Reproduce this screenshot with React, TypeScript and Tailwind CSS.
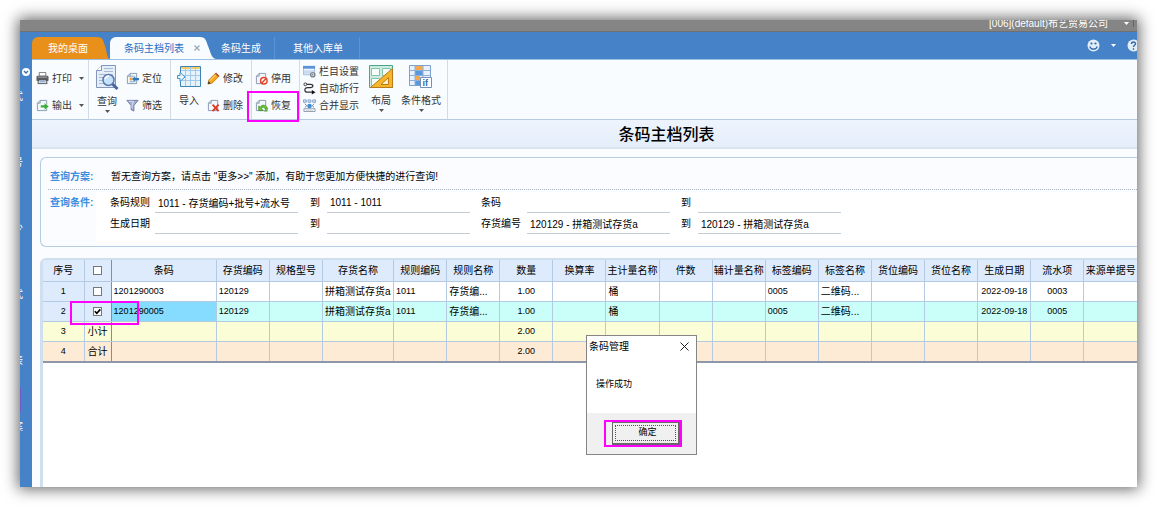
import React, { useState } from "react";
import { clsx } from "clsx";

const Caret: React.FC<{ className?: string }> = ({ className }) => (
  <svg width="5" height="3" viewBox="0 0 5 3" className={clsx("shrink-0", className)} aria-hidden="true">
    <path d="M0 0h5L2.5 3z" fill="currentColor" />
  </svg>
);

const Page = () => (
  <>
    <path d="M4.5 1.5h7v11h-10v-8z" fill="#f3f7fb" stroke="#8496ad" />
    <path d="M1.5 4.5h3v-3" fill="none" stroke="#8496ad" />
  </>
);

const SmallIcon: React.FC<{ children: React.ReactNode }> = ({ children }) => (
  <svg width="13" height="13" viewBox="0 0 14 14" className="shrink-0" aria-hidden="true">
    {children}
  </svg>
);

const PrintIcon = () => (
  <SmallIcon>
    <path d="M3.5.5h7v4h-7z" fill="#fff" stroke="#777" />
    <rect x=".5" y="4" width="13" height="6" rx="1.5" fill="#595d63" />
    <rect x="2" y="5" width="10" height="1" fill="#a9afb8" />
    <path d="M3 8.5h8l1 4H2z" fill="#dce8f7" stroke="#555" />
    <path d="M4 10.5h6" stroke="#6f9dd6" />
  </SmallIcon>
);

const ExportIcon = () => (
  <SmallIcon>
    <Page />
    <path d="M5 6.5h4V4l5 4-5 4V9.5H5z" fill="#35ad36" stroke="#fff" strokeWidth=".5" />
  </SmallIcon>
);

const LocateIcon = () => (
  <SmallIcon>
    <Page />
    <path d="M4 6h3v3H4z" fill="#f0a030" />
    <path d="M4 10.5h5M4 4.5h5" stroke="#7aa5d6" />
    <path d="M6.500 7.500l3.500-3v2h4v2.500h-4V11z" fill="#2e76bd" />
  </SmallIcon>
);

const FilterIcon = () => (
  <SmallIcon>
    <path d="M1 1.5h12L8.5 7v6l-3-1.5V7z" fill="#a3aed4" stroke="#6d7798" />
    <path d="M3 2.5h5L6.5 7v3" fill="none" stroke="#dfe6f8" />
  </SmallIcon>
);

const EditIcon = () => (
  <SmallIcon>
    <path d="M1 13l1-4.5L9.500 1 13 4.500 5.500 12z" fill="#f6a81c" stroke="#b87310" strokeWidth=".8" />
    <path d="M8.500 2l3.500 3.500 1.200-1.500L10 .8z" fill="#b0543a" />
    <path d="M3 9.500l6.500-6.500" stroke="#ffe08a" />
    <path d="M1 13l.7-3L4 12.400z" fill="#333" />
  </SmallIcon>
);

const DeleteIcon = () => (
  <SmallIcon>
    <Page />
    <path d="M6 6l6.500 7M12.500 6L6 13" stroke="#e03a20" strokeWidth="2" />
  </SmallIcon>
);

const DisableIcon = () => (
  <SmallIcon>
    <Page />
    <circle cx="9.500" cy="9.500" r="3.500" fill="#fff" stroke="#e4432b" strokeWidth="1.600" />
    <path d="M7 12l5-5" stroke="#e4432b" strokeWidth="1.500" />
  </SmallIcon>
);

const RestoreIcon = () => (
  <SmallIcon>
    <Page />
    <path d="M4 12.500V7.500l1.500 1.300C7.500 5.500 12.500 6 13.500 10.500l-2.500.5c-.5-2.300-2.700-3-4-1L8.500 12.500z" fill="#6cc339" stroke="#2f8a12" strokeWidth=".7" />
    <path d="M9.500 13.500l4-3v3z" fill="#49ad22" />
  </SmallIcon>
);

const ColumnIcon = () => (
  <SmallIcon>
    <path d="M.5 1.500h12v9H.5z" fill="#eff6fe" stroke="#9bbbe0" />
    <path d="M0 1h13v3H0z" fill="#5a95dc" />
    <path d="M1 6.500h11M1 8.500h7" stroke="#a9c4e4" />
    <circle cx="10.500" cy="10.500" r="2.300" fill="#eee" stroke="#7c8392" strokeWidth="1.500" />
    <circle cx="10.500" cy="10.500" r=".7" fill="#566" />
  </SmallIcon>
);

const WrapIcon = () => (
  <SmallIcon>
    <path d="M3 2.500h5c3.500 0 3.500 3.500 0 3.500H5c-4 0-4 5 0 5h5" fill="none" stroke="#333" strokeWidth="1.300" />
    <circle cx="2.500" cy="2.500" r="1.500" fill="#fff" stroke="#333" />
    <path d="M9.500 8.500l4 2.500-4 2.500z" fill="#111" />
  </SmallIcon>
);

const MergeIcon = () => (
  <SmallIcon>
    <path d="M.5 1h3v2.500h-3zM5.500 1h3v2.500h-3zM10.500 1h3v2.500h-3z" fill="#dcebfa" stroke="#7c9cc2" />
    <path d="M1 10.500h12v3H1z" fill="#fff" stroke="#8a97a8" />
    <circle cx="7" cy="7.500" r="2.500" fill="#3f8ed2" />
    <path d="M2 5l2 2.500L2 9M12 5l-2 2.500L12 9" fill="none" stroke="#6c87a8" />
    <path d="M3 12h8" stroke="#bcc8d6" />
  </SmallIcon>
);

const QueryIcon = () => (
  <svg width="24" height="25" viewBox="0 0 24 25" aria-hidden="true">
    <path d="M6.500.5h14v22H1.500v-17z" fill="#e4edf8" stroke="#8496ba" />
    <path d="M1.500 5.500h5v-5" fill="#fff" stroke="#8496ba" />
    <path d="M9 3.500h9M9 6.500h9M4 9.500h14M4 12.500h14M4 15.500h6M4 18.500h5" stroke="#a9bad3" />
    <circle cx="13.500" cy="15" r="5.500" fill="#c7e2fb" stroke="#5878ad" strokeWidth="1.500" />
    <path d="M10 14c.5-2 2-3 4-3" fill="none" stroke="#fff" strokeWidth="1.500" />
    <path d="M17.500 19l5 5" stroke="#4b669c" strokeWidth="3" />
  </svg>
);

const ImportIcon = () => (
  <svg width="24" height="24" viewBox="0 0 24 24" aria-hidden="true">
    <path d="M3.500 1.500h20v20h-20z" fill="#e6f3fd" stroke="#3e83b5" />
    <path d="M4 2h19v2H4z" fill="#f7cf68" />
    <path d="M4 5.500h19M4 10.500h19M4 15.500h19M8.500 2v19M13.500 2v19M18.500 2v19" stroke="#a4c9e6" />
    <path d="M.5 10.500H3v-3l5 4.500-5 4.500v-3H.5z" fill="#eaf6ff" stroke="#3f93cf" />
  </svg>
);

const LayoutIcon = () => (
  <svg width="24" height="24" viewBox="0 0 24 24" aria-hidden="true">
    <path d="M.5.5h23v22H.5z" fill="#cdebdf" stroke="#4ba58a" />
    <path d="M2.500 3.500h8v7h-8zM13.500 3.500h8v7h-8zM2.500 13.500h8v7h-8z" fill="#f5fcf9" stroke="#83c2ac" />
    <path d="M1.500 22.500l22-19v19z" fill="#f7b52c" stroke="#b87b18" />
    <path d="M12 19.500l7.500-7v7z" fill="#fff0c9" stroke="#b87b18" />
  </svg>
);

const ConditionIcon = () => (
  <svg width="24" height="24" viewBox="0 0 24 24" aria-hidden="true">
    <path d="M.5.5h21v20H.5z" fill="#e9f2fc" stroke="#7fa3cf" />
    <path d="M6 1h8v4H6zM6 11h5v4H6z" fill="#f5a94e" />
    <path d="M6 6h8v4H6zM6 16h8v4H6z" fill="#5a98de" />
    <path d="M1 5.500h20M1 10.500h20M1 15.500h20M6 1v19M14 1v19" stroke="#8eb0d8" />
    <path d="M11.500 12.500h11v10h-11z" fill="#fff" stroke="#7391b8" />
    <text x="13.500" y="21" fontSize="9" fontWeight="700" fill="#2d6bb0" fontFamily="Liberation Sans, sans-serif">
      if
    </text>
  </svg>
);

interface ToolProps {
  icon: React.ReactNode;
  label: string;
  caret?: boolean;
  highlighted?: boolean;
  compact?: boolean;
}

const Tool: React.FC<ToolProps> = ({ icon, label, caret, highlighted, compact }) => (
  <button
    type="button"
    className={clsx("relative flex items-center gap-[3px] whitespace-nowrap", compact ? "h-[17px]" : "h-[27px]")}
  >
    {icon}
    <span>{label}</span>
    {caret && <Caret className="ml-1 text-[#555]" />}
    {highlighted && <span className="absolute -inset-x-2 -top-px -bottom-[3px] border-2 border-[#ff00ff]" />}
  </button>
);

const BigTool: React.FC<ToolProps> = ({ icon, label, caret }) => (
  <button type="button" className="flex flex-col items-center whitespace-nowrap">
    {icon}
    <span className="mt-1 leading-4">{label}</span>
    {caret && <Caret className="text-[#555]" />}
  </button>
);

const Group: React.FC<{ children: React.ReactNode; className?: string }> = ({ children, className }) => (
  <div className={clsx("flex h-full border-r border-[#d3dbe4] pt-[5px]", className)}>{children}</div>
);

const Ribbon = () => (
  <div className="flex h-[60px] shrink-0 border-b border-[#b7cbe0] bg-[#f8fcff] text-[10px] text-[#333]">
    <Group className="flex-col pr-1 pl-1">
      <Tool icon={<PrintIcon />} label="打印" caret />
      <Tool icon={<ExportIcon />} label="输出" caret />
    </Group>
    <Group className="gap-[7px] pr-2 pl-1.5">
      <BigTool icon={<QueryIcon />} label="查询" caret />
      <div>
        <Tool icon={<LocateIcon />} label="定位" />
        <Tool icon={<FilterIcon />} label="筛选" />
      </div>
    </Group>
    <Group className="gap-1.5 pr-2 pl-1.5">
      <BigTool icon={<ImportIcon />} label="导入" />
      <div>
        <Tool icon={<EditIcon />} label="修改" />
        <Tool icon={<DeleteIcon />} label="删除" />
      </div>
    </Group>
    <Group className="flex-col pr-2 pl-[3px]">
      <Tool icon={<DisableIcon />} label="停用" />
      <Tool icon={<RestoreIcon />} label="恢复" highlighted />
    </Group>
    <Group className="pr-1.5 pl-[3px]">
      <div className="mr-2.5 -mt-0.5">
        <Tool icon={<ColumnIcon />} label="栏目设置" compact />
        <Tool icon={<WrapIcon />} label="自动折行" compact />
        <Tool icon={<MergeIcon />} label="合并显示" compact />
      </div>
      <div className="flex gap-2">
        <BigTool icon={<LayoutIcon />} label="布局" caret />
        <BigTool icon={<ConditionIcon />} label="条件格式" caret />
      </div>
    </Group>
  </div>
);

const TabBar = () => (
  <div className="flex h-7 shrink-0 items-end justify-between border-b border-[#9dbfe5] bg-[#4582c8] text-[10px] text-white">
    <nav className="flex h-[22px] items-stretch">
      <button type="button" className="flex">
        <span className="flex h-full w-16 items-center justify-end rounded-tl-md bg-[#e89019] pr-2">我的桌面</span>
        <svg width="14" height="22" viewBox="0 0 14 22" aria-hidden="true">
          <path d="M0 0C7 0 7 3 9 9C11 15 11 22 14 22H0z" fill="#e89019" />
        </svg>
      </button>
      <button type="button" className="flex text-[#1f6fc4]">
        <span className="flex h-full items-center gap-2.5 rounded-tl-md bg-[#f8fcff] pl-3.5">
          条码主档列表
          <svg width="6" height="6" viewBox="0 0 6 6" aria-hidden="true">
            <path d="M.5.5l5 5M5.500.5l-5 5" stroke="#9aa8b8" strokeWidth="1.300" />
          </svg>
        </span>
        <svg width="16" height="22" viewBox="0 0 16 22" aria-hidden="true">
          <path d="M0 0C6 0 6 4 8 9C11 16 11 21 16 22H0z" fill="#f8fcff" />
        </svg>
      </button>
      <button type="button" className="w-[59px] border-r border-[#5b95d8] pr-2">条码生成</button>
      <button type="button" className="w-[85px] border-r border-[#5b95d8] pl-0.5">其他入库单</button>
    </nav>
    <div className="flex h-full items-center gap-[11px] overflow-hidden">
      <button type="button" aria-label="表情">
        <svg width="13" height="13" viewBox="0 0 13 13" aria-hidden="true">
          <circle cx="6.500" cy="6.500" r="6" fill="#e2edf9" />
          <circle cx="4.500" cy="4.500" r="1.100" fill="#2b66ab" />
          <circle cx="8.500" cy="4.500" r="1.100" fill="#2b66ab" />
          <path d="M2.800 7.500c1 3.600 6.400 3.600 7.400 0" fill="none" stroke="#2b66ab" strokeWidth="1.200" />
        </svg>
      </button>
      <Caret />
      <button type="button" aria-label="帮助" className="w-2.5 overflow-hidden">
        <svg width="13" height="13" viewBox="0 0 13 13" className="max-w-none" aria-hidden="true">
          <circle cx="6.500" cy="6.500" r="6" fill="#e2edf9" />
          <path d="M4.500 5c0-2.700 4-2.500 4-.3 0 1.600-2 1.500-2 3.300M6.500 9.200v1.500" fill="none" stroke="#2b66ab" strokeWidth="1.400" />
        </svg>
      </button>
    </div>
  </div>
);

const fields = [
  { label: "条码规则", value: "1011 - 存货编码+批号+流水号" },
  { label: "到", value: "1011 - 1011" },
  { label: "条码", value: "" },
  { label: "到", value: "" },
  { label: "生成日期", value: "" },
  { label: "到", value: "" },
  { label: "存货编号", value: "120129 - 拼箱测试存货a" },
  { label: "到", value: "120129 - 拼箱测试存货a" },
];

const QueryPanel = () => (
  <section className="mt-2 ml-2 shrink-0 rounded-l-md border border-r-0 border-[#b5cde2] bg-[#fafcff] pb-1">
    <div className="ml-[7px] flex h-8 items-center border-b border-dotted border-[#aab4be] pt-1.5">
      <h2 className="w-[63px] pl-0.5 font-bold text-[#3a8ee0]">查询方案:</h2>
      <p>暂无查询方案，请点击 "更多&gt;&gt;" 添加，有助于您更加方便快捷的进行查询!</p>
    </div>
    <div className="ml-[7px] flex pt-0.5">
      <h2 className="w-12 pl-0.5 leading-[21px] font-bold whitespace-nowrap text-[#3a8ee0]">查询条件:</h2>
      <div className="grid flex-1 grid-cols-[45px_155px_17px_154px_46px_154px_17px_143px] bg-white pb-2 pl-[14px]">
        {fields.map((field, i) => (
          <React.Fragment key={i}>
            <label htmlFor={`field-${i}`} className="leading-[21px]">
              {field.label}
            </label>
            <input
              id={`field-${i}`}
              defaultValue={field.value}
              className="h-[21px] w-[143px] border-b border-[#c3cbd6] bg-transparent pl-[3px] outline-none"
            />
          </React.Fragment>
        ))}
      </div>
    </div>
  </section>
);

const columns = [
  { title: "条码", width: 105 },
  { title: "存货编码", width: 53 },
  { title: "规格型号", width: 53 },
  { title: "存货名称", width: 71 },
  { title: "规则编码", width: 53 },
  { title: "规则名称", width: 53 },
  { title: "数量", width: 53, center: true },
  { title: "换算率", width: 53 },
  { title: "主计量名称", width: 53 },
  { title: "件数", width: 53 },
  { title: "辅计量名称", width: 53 },
  { title: "标签编码", width: 53 },
  { title: "标签名称", width: 53 },
  { title: "货位编码", width: 53 },
  { title: "货位名称", width: 53 },
  { title: "生成日期", width: 53, center: true },
  { title: "流水项", width: 53, center: true },
  { title: "来源单据号", width: 53 },
];

const makeRow = (code: string, serial: string) => [
  code, "120129", "", "拼箱测试存货a", "1011", "存货编...", "1.00", "", "桶", "", "", "0005", "二维码...", "", "", "2022-09-18", serial, "",
];

const totals = columns.map((column) => (column.title === "数量" ? "2.00" : ""));

const rows = [
  { cells: makeRow("1201290003", "0003"), color: "bg-white" },
  { cells: makeRow("1201290005", "0005"), color: "bg-[#c9fff8]" },
  { label: "小计", cells: totals, color: "bg-[#fbfdd7]" },
  { label: "合计", cells: totals, color: "bg-[#fdebd5]" },
];

interface CheckProps {
  checked: boolean;
  label: string;
  onChange: () => void;
}

const Check: React.FC<CheckProps> = ({ checked, label, onChange }) => (
  <label className="relative mx-auto block size-[9px]">
    <input
      type="checkbox"
      aria-label={label}
      checked={checked}
      onChange={onChange}
      className="block size-[9px] appearance-none border border-[#777] bg-white"
    />
    {checked && (
      <svg viewBox="0 0 9 9" className="pointer-events-none absolute inset-0" aria-hidden="true">
        <path d="M1.800 4.200l2 2.200 3.500-4" fill="none" stroke="#000" strokeWidth="1.600" />
      </svg>
    )}
  </label>
);

const BarcodeTable = () => {
  const [selected, setSelected] = useState<number[]>([1]);
  const toggle = (i: number) =>
    setSelected(selected.includes(i) ? selected.filter((n) => n !== i) : [...selected, i]);

  return (
    <section className="mt-[11px] ml-2 flex-1 rounded-tl-md border-t-2 border-l-3 border-[#cfdfee] bg-white">
      <table className="w-full table-fixed border-collapse border-b-2 border-[#8e97a8] text-left leading-[19px] whitespace-nowrap">
        <colgroup>
          <col style={{ width: 41 }} />
          <col style={{ width: 27 }} />
          {columns.map((column) => (
            <col key={column.title} style={{ width: column.width }} />
          ))}
        </colgroup>
        <thead>
          <tr className="h-[21px] bg-[#deebfc] text-center">
            <th className="border-r border-b border-[#b4c9e2] p-0 font-normal">序号</th>
            <th className="border-r border-b border-r-[#858d99] border-b-[#b4c9e2] p-0">
              <Check
                label="全选"
                checked={selected.length === 2}
                onChange={() => setSelected(selected.length === 2 ? [] : [0, 1])}
              />
            </th>
            {columns.map((column) => (
              <th key={column.title} className="border-r border-b border-[#b4c9e2] p-0 font-normal last:border-r-0">
                {column.title}
              </th>
            ))}
          </tr>
        </thead>
        <tbody>
          {rows.map((row, i) => (
            <tr key={i} className={clsx("h-5", row.color)}>
              <td
                className={clsx(
                  "border-r border-b border-[#b4c9e2] p-0 text-center text-[9px]",
                  !row.label && "bg-[#deebfc]"
                )}
              >
                {i + 1}
              </td>
              <td
                className={clsx(
                  "relative border-r border-b border-r-[#858d99] border-b-[#b4c9e2] p-0 text-center",
                  !row.label && "bg-[#deebfc]"
                )}
              >
                {row.label || <Check label={`第${i + 1}行`} checked={selected.includes(i)} onChange={() => toggle(i)} />}
                {i === 1 && (
                  <span className="pointer-events-none absolute -top-px -right-7 -bottom-1 -left-[15px] z-10 border-2 border-[#ff00ff]" />
                )}
              </td>
              {row.cells.map((cell, j) => (
                <td
                  key={j}
                  className={clsx(
                    "border-r border-b border-[#b4c9e2] p-0 last:border-r-0",
                    columns[j].center ? "text-center" : "pl-0.5",
                    /^[\d.-]+$/.test(cell) && "text-[9px]",
                    i === 1 && j === 0 && "bg-[#86dcff]"
                  )}
                >
                  {cell}
                </td>
              ))}
            </tr>
          ))}
        </tbody>
      </table>
    </section>
  );
};

const ResultDialog = () => (
  <div
    role="dialog"
    aria-label="条码管理"
    className="absolute top-[315px] left-[566px] z-20 flex h-[120px] w-[111px] flex-col border border-[#858585] bg-white text-black"
  >
    <div className="flex h-5 items-center justify-between pr-[7px] pl-0.5">
      <span>条码管理</span>
      <button type="button" aria-label="关闭">
        <svg width="9" height="9" viewBox="0 0 9 9" aria-hidden="true">
          <path d="M.5.5l8 8M8.500.5l-8 8" stroke="#222" />
        </svg>
      </button>
    </div>
    <p className="flex-1 pt-5 pl-[9px] text-[9px] leading-4">操作成功</p>
    <div className="h-[41px] bg-[#f0f0f0] pt-[7px] pl-[17px]">
      <div className="w-[78px] border-2 border-[#ff00ff] pl-1.5">
        <button
          type="button"
          className="block h-[23px] w-[68px] border border-r-2 border-b-2 border-[#696969] bg-[#f0f0f0] p-0.5 text-[9px]"
        >
          <span className="flex h-full items-center justify-center border border-dotted border-[#555] pl-1">确定</span>
        </button>
      </div>
    </div>
  </div>
);

const sideLabels = ["式", "号", "少", "式", "表", "案"];

const SideBar = () => (
  <aside className="relative w-3 shrink-0 overflow-hidden bg-[#4582c8] text-[10px] text-white">
    <div className="flex flex-col items-end pt-[31px] pr-[9px]">
      {sideLabels.map((label, i) => (
        <span key={i} className="flex h-[66px] w-2.5 shrink-0 items-center">
          {label}
        </span>
      ))}
    </div>
    <button type="button" aria-label="展开" className="absolute top-9 left-0.5">
      <svg width="8" height="8" viewBox="0 0 8 8" aria-hidden="true">
        <circle cx="4" cy="4" r="4" fill="#fff" />
        <path d="M2 3l2 2 2-2" fill="none" stroke="#3c6ca8" strokeWidth="1.300" />
      </svg>
    </button>
    <span className="absolute top-[356px] left-0 h-6 w-px bg-[#6a5bc8]" />
  </aside>
);

const App: React.FC = () => (
  <div className="h-screen min-h-[500px] bg-white p-5 font-['Liberation_Sans','Noto_Sans_CJK_SC',sans-serif] text-[10px] text-black">
    <div className="relative flex h-full flex-col shadow-[0_0_14px_2px_rgba(0,0,0,0.6)]">
      <header className="flex h-3 shrink-0 justify-end overflow-hidden border-b border-[#707070] bg-[#858585] pr-[3px] text-white">
        <button type="button" className="flex h-[7px] items-center gap-4 border-r border-[#666] pr-1 leading-[7px]">
          <span>[006](default)布艺贸易公司</span>
          <Caret />
        </button>
      </header>
      <div className="flex min-h-0 flex-1">
        <SideBar />
        <main className="flex min-w-0 flex-1 flex-col overflow-hidden bg-[#fafcff]">
          <TabBar />
          <Ribbon />
          <h1 className="flex h-[29px] shrink-0 items-center justify-center border-b-2 border-[#dbe4ee] bg-linear-to-b from-[#eef4fd] to-[#e4eefa] pt-0.5 pl-[164px] text-base font-medium">
            条码主档列表
          </h1>
          <QueryPanel />
          <BarcodeTable />
        </main>
      </div>
      <ResultDialog />
    </div>
  </div>
);

export default App;
